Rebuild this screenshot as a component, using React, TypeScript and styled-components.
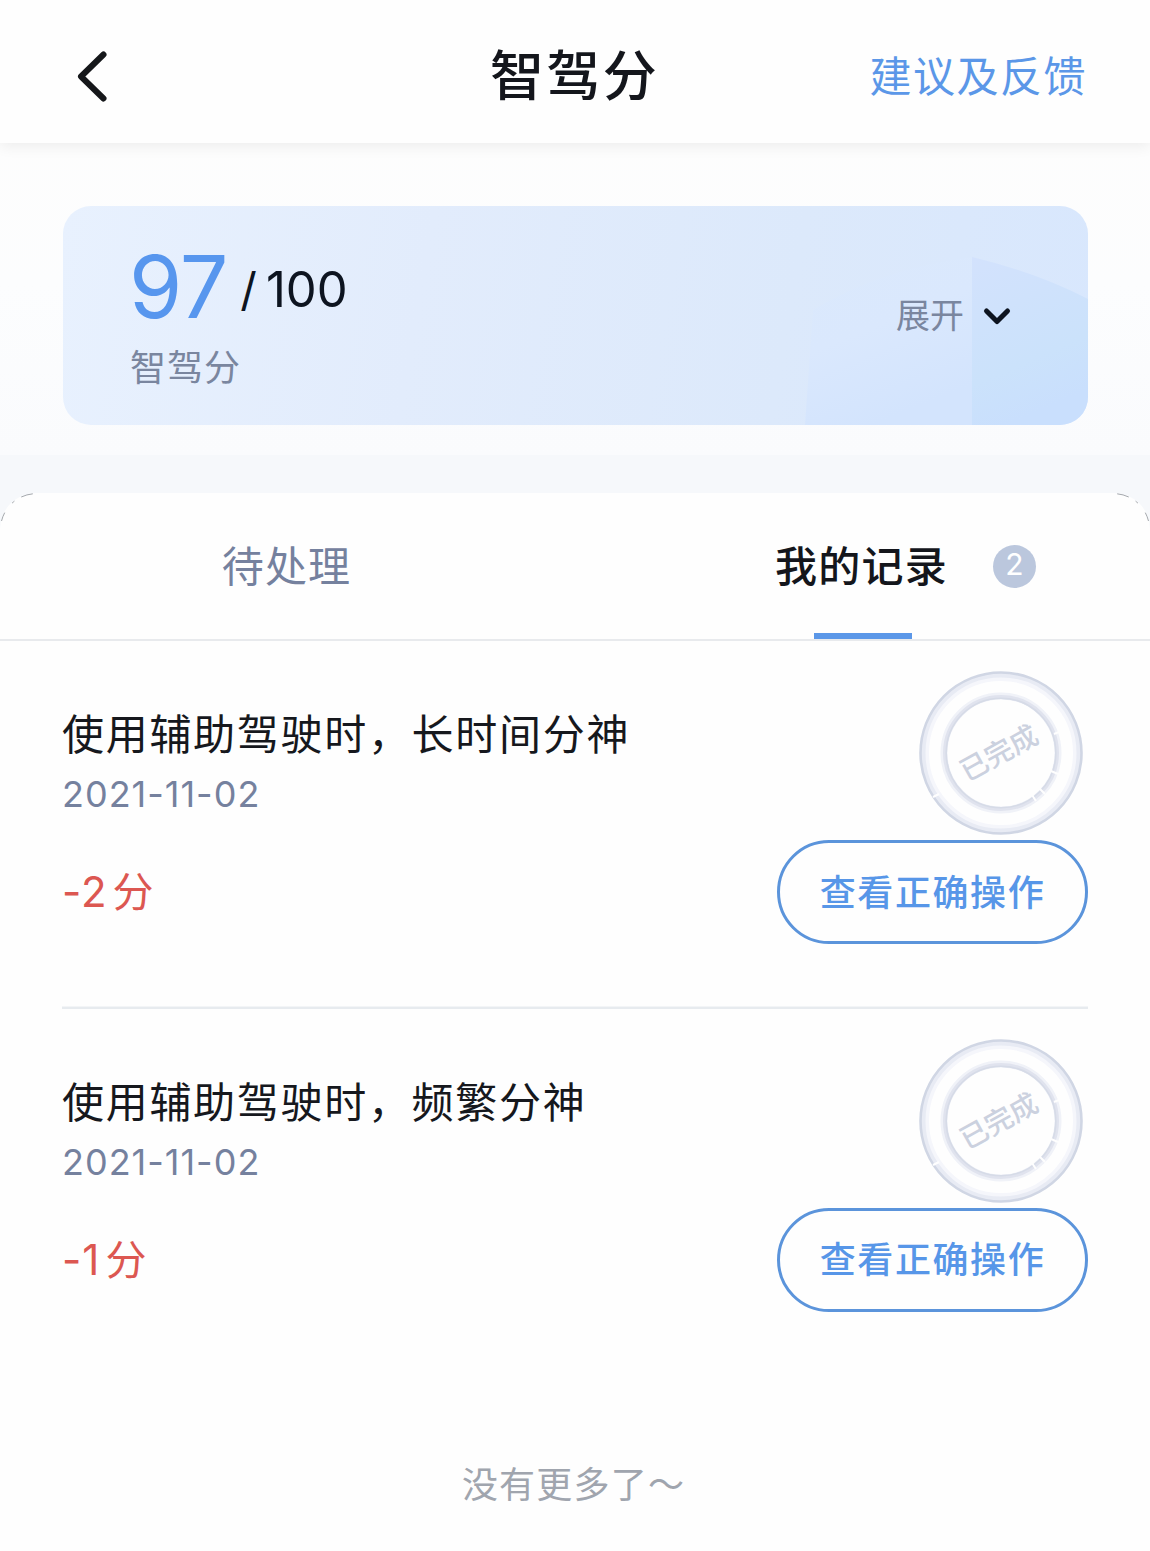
import * as React from 'react';

import { Component } from 'react';
import styled, { createGlobalStyle } from 'styled-components';

type RecordItem = {
  id: number;
  title: string;
  date: string;
  score: number;
};

const records: RecordItem[] = [
  { id: 1, title: '使用辅助驾驶时，长时间分神', date: '2021-11-02', score: -2 },
  { id: 2, title: '使用辅助驾驶时，频繁分神', date: '2021-11-02', score: -1 },
];

const Stamp = () => (
  <StampSvg viewBox='0 0 166 166'>
    <g fill='none'>
      <circle cx='83' cy='83' r='76' stroke='#f5f6fb' strokeWidth='8' />
      <circle cx='83' cy='83' r='78' stroke='#e8ebf4' strokeWidth='5' />
      <circle cx='83' cy='83' r='80.500' stroke='#d0d6e4' strokeWidth='2.6' />
      <circle cx='83' cy='83' r='57' stroke='#f0f2f8' strokeWidth='7' />
      <circle cx='83' cy='83' r='56' stroke='#e0e3ee' strokeWidth='4' />
      <circle cx='83' cy='83' r='54.800' stroke='#d6dbe7' strokeWidth='1.6' />
      <path d='M15 127l6-3M146 136l4 3M136 64l5-2M133 101l7 3M121 118l6 6M114 125l4 6' stroke='#fefefe' strokeWidth='2' />
    </g>
    <text x='81' y='93' textAnchor='middle' transform='rotate(-29 81 83)'>已完成</text>
  </StampSvg>
)

export default class App extends Component {

  state = {
    tab: 'records'
  }

  selectTab = (tab: string) => {
    this.setState({ tab })
  }

  render() {
    const { tab } = this.state

    return (
      <Container>
        <GlobalStyle />
        <Header>
          <BackButton aria-label='返回'>
            <svg width='34' height='54' viewBox='0 0 34 54' fill='none'>
              <path d='M29.500 4.500L7 26.500L29.500 48.500' stroke='#15171a' strokeWidth='6' strokeLinecap='round' strokeLinejoin='round' />
            </svg>
          </BackButton>
          <Title>智驾分</Title>
          <Feedback>建议及反馈</Feedback>
        </Header>

        <ScoreSection>
          <ScoreCard>
            <CardArt viewBox='0 0 1025 219' preserveAspectRatio='none'>
              <defs>
                <linearGradient id='left' x1='0' y1='0' x2='0.4' y2='1'>
                  <stop offset='0' stopColor='#dbe9fc' />
                  <stop offset='0.5' stopColor='#dae8fd' />
                  <stop offset='1' stopColor='#d3e4fd' />
                </linearGradient>
                <linearGradient id='right' x1='0' y1='0' x2='0.3' y2='1'>
                  <stop offset='0' stopColor='#d3e2fd' />
                  <stop offset='0.7' stopColor='#cbe2fb' />
                  <stop offset='1' stopColor='#c9dffd' />
                </linearGradient>
              </defs>
              <path d='M742 219L750 104Q820 62 909 51V219Z' fill='url(#left)' />
              <path d='M909 51Q972 66 1025 93V219H909Z' fill='url(#right)' />
            </CardArt>
            <ScoreInfo>
              <ScoreRow>
                <Score>97</Score>
                <Slash>/</Slash>
                <Total>100</Total>
              </ScoreRow>
              <ScoreLabel>智驾分</ScoreLabel>
            </ScoreInfo>
            <Expand>
              展开
              <svg width='30' height='20' viewBox='0 0 30 20' fill='none'>
                <path d='M4.500 5L15 15.500L25.500 5' stroke='#0d1420' strokeWidth='5' strokeLinecap='round' strokeLinejoin='round' />
              </svg>
            </Expand>
          </ScoreCard>
        </ScoreSection>

        <SheetWrap>
          <Sheet>
            <Tabs>
              <Tab $active={tab === 'pending'} onClick={() => this.selectTab('pending')}>
                <TabLabel>待处理</TabLabel>
              </Tab>
              <Tab $active={tab === 'records'} onClick={() => this.selectTab('records')}>
                <TabLabel>
                  我的记录
                  <Badge>{records.length}</Badge>
                </TabLabel>
              </Tab>
            </Tabs>

            <List>
              {records.map((item) => (
                <Item key={item.id}>
                  <ItemBody>
                    <ItemTitle>{item.title}</ItemTitle>
                    <ItemDate>{item.date}</ItemDate>
                    <ItemScore>
                      <span>{item.score}</span>
                      <Unit>分</Unit>
                    </ItemScore>
                  </ItemBody>
                  <ItemSide>
                    <Stamp />
                    <ActionButton>查看正确操作</ActionButton>
                  </ItemSide>
                </Item>
              ))}
            </List>
            <ListEnd>没有更多了～</ListEnd>
          </Sheet>
          <Corner viewBox='0 0 36 36' fill='none'>
            <path d='M1.500 28A36 36 0 0 1 33 .8' stroke='#8b9097' strokeWidth='.8' strokeDasharray='9 12 3 8 12 60' />
          </Corner>
          <Corner $right viewBox='0 0 36 36' fill='none'>
            <path d='M1.500 28A36 36 0 0 1 33 .8' stroke='#8b9097' strokeWidth='.8' strokeDasharray='9 12 3 8 12 60' />
          </Corner>
        </SheetWrap>
      </Container>
    )
  }
}

const GlobalStyle = createGlobalStyle`
  * {
    box-sizing: border-box;
  }

  body {
    margin: 0;
    background: #fff;
    font-family: 'Inter', 'Noto Sans CJK SC', sans-serif;
  }

  button {
    padding: 0;
    border: none;
    background: none;
    font-family: inherit;
    cursor: pointer;
  }
`

const Container = styled.div`
  display: flex;
  flex-direction: column;
  width: 1150px;
  height: 1551px;
  overflow: hidden;
  background: #fff;
`

const Header = styled.div`
  display: grid;
  grid-template-columns: 1fr auto 1fr;
  align-items: center;
  height: 143px;
  padding: 10px 63px 0 74px;
  background: #fefefe;
  box-shadow: 0 3px 14px rgba(0, 0, 0, 0.07);
  z-index: 1;
`

const BackButton = styled.button`
  display: flex;
  justify-self: start;
`

const Title = styled.h1`
  margin: 0 0 0 -12px;
  color: #14161c;
  font-size: 54px;
  font-weight: 500;
  line-height: 80px;
  letter-spacing: 2.4px;
`

const Feedback = styled.button`
  justify-self: end;
  color: #5b97e8;
  font-size: 42px;
  line-height: 60px;
  letter-spacing: 1.5px;
`

const ScoreSection = styled.div`
  height: 312px;
  padding: 63px 62px 0 63px;
  background: linear-gradient(#fdfdfd, #fcfdfe 45%, #fafbfd);
`

const ScoreCard = styled.div`
  position: relative;
  display: flex;
  justify-content: space-between;
  align-items: center;
  height: 219px;
  padding: 0 76px 0 67px;
  border-radius: 28px;
  overflow: hidden;
  background: linear-gradient(100deg, #e8f1fe, #e2ecfc 35%, #dce9fb 70%, #d8e7fd);
`

const CardArt = styled.svg`
  position: absolute;
  inset: 0;
  width: 100%;
  height: 100%;
`

const ScoreInfo = styled.div`
  display: flex;
  flex-direction: column;
  gap: 11px;
  padding-top: 4px;
  z-index: 1;
`

const ScoreRow = styled.div`
  display: flex;
  height: 90px;
  line-height: 90px;
`

const Score = styled.span`
  margin-left: -1px;
  color: #5796ee;
  font-size: 86px;
  letter-spacing: -1px;
`

const Slash = styled.span`
  margin-left: 13px;
  padding-top: 2px;
  color: #0d1420;
  font-size: 46px;
`

const Total = styled.span`
  margin-left: 9px;
  padding-top: 3px;
  color: #0d1420;
  font-size: 49px;
`

const ScoreLabel = styled.span`
  color: #7a869f;
  font-size: 36px;
  line-height: 50px;
  letter-spacing: 1px;
`

const Expand = styled.button`
  display: flex;
  align-items: center;
  gap: 18px;
  color: #7a869f;
  font-size: 34px;
  line-height: 48px;
  z-index: 1;
`

const SheetWrap = styled.div`
  position: relative;
  flex: 1;
  padding-top: 38px;
  background: #f6f8fb;
`

const Sheet = styled.div`
  height: 100%;
  border-radius: 36px 36px 0 0;
  background: #fefefe;
`

// dark hairline that shows along the rounded corners of the sheet
const Corner = styled.svg<{ $right?: boolean }>`
  position: absolute;
  top: 38px;
  ${({ $right }) => $right ? 'right: 0; transform: scaleX(-1);' : 'left: 0;'}
  width: 36px;
  height: 36px;
`

const Tabs = styled.div`
  display: flex;
  height: 148px;
  border-bottom: 2px solid #e8eaed;
`

const Tab = styled.button<{ $active: boolean }>`
  display: flex;
  flex: 1;
  flex-direction: column;
  align-items: center;
  color: ${({ $active }) => $active ? '#14161c' : '#75819e'};
  font-size: 42px;
  font-weight: ${({ $active }) => $active ? 500 : 400};
  line-height: 60px;
  letter-spacing: 1.2px;

  &::after {
    content: '';
    width: 98px;
    height: 6px;
    margin-top: auto;
    background: ${({ $active }) => $active ? '#5b97e8' : 'transparent'};
  }
`

const TabLabel = styled.span`
  position: relative;
  margin: 44px 2px 0 0;
`

const Badge = styled.span`
  position: absolute;
  top: 8px;
  right: -88px;
  width: 43px;
  height: 43px;
  border-radius: 50%;
  background: #bbc7dd;
  color: #fff;
  font-size: 30px;
  font-weight: 400;
  line-height: 38px;
  letter-spacing: 0;
  text-align: center;
`

const List = styled.div`
  display: flex;
  flex-direction: column;
  padding: 0 62px;
`

const Item = styled.div`
  display: flex;
  justify-content: space-between;
  height: 367.5px;

  & + & {
    box-shadow: 0 -2.5px 0 #e7ebef;
  }
`

const ItemBody = styled.div`
  display: flex;
  flex-direction: column;
  padding-top: 64px;
`

const ItemTitle = styled.div`
  color: #16181d;
  font-size: 42px;
  line-height: 60px;
  letter-spacing: 1.7px;
`

const ItemDate = styled.div`
  margin-top: 7px;
  color: #75819e;
  font-size: 36px;
  line-height: 44px;
  letter-spacing: 1px;
`

const ItemScore = styled.div`
  display: flex;
  align-items: baseline;
  margin-top: 50px;
  color: #dc5751;
  font-size: 42px;
  line-height: 52px;
  letter-spacing: 1px;
`

const Unit = styled.span`
  margin-left: 5px;
  font-size: 41px;
`

const ItemSide = styled.div`
  display: flex;
  flex-direction: column;
  align-items: flex-end;
  padding-top: 29px;
`

const StampSvg = styled.svg`
  width: 166px;
  height: 166px;
  margin-right: 4px;

  text {
    fill: #cbd1df;
    font-size: 28px;
    font-weight: 500;
  }
`

const ActionButton = styled.button`
  width: 311px;
  height: 104px;
  margin-top: 4px;
  padding-bottom: 5px;
  border: 3px solid #5b94db;
  border-radius: 52px;
  color: #5796e8;
  font-size: 36px;
  font-weight: 500;
  letter-spacing: 1.6px;
`

const ListEnd = styled.div`
  margin: 83px 3px 0 0;
  color: #a0a5ae;
  font-size: 36px;
  line-height: 52px;
  letter-spacing: 1.2px;
  text-align: center;
`
